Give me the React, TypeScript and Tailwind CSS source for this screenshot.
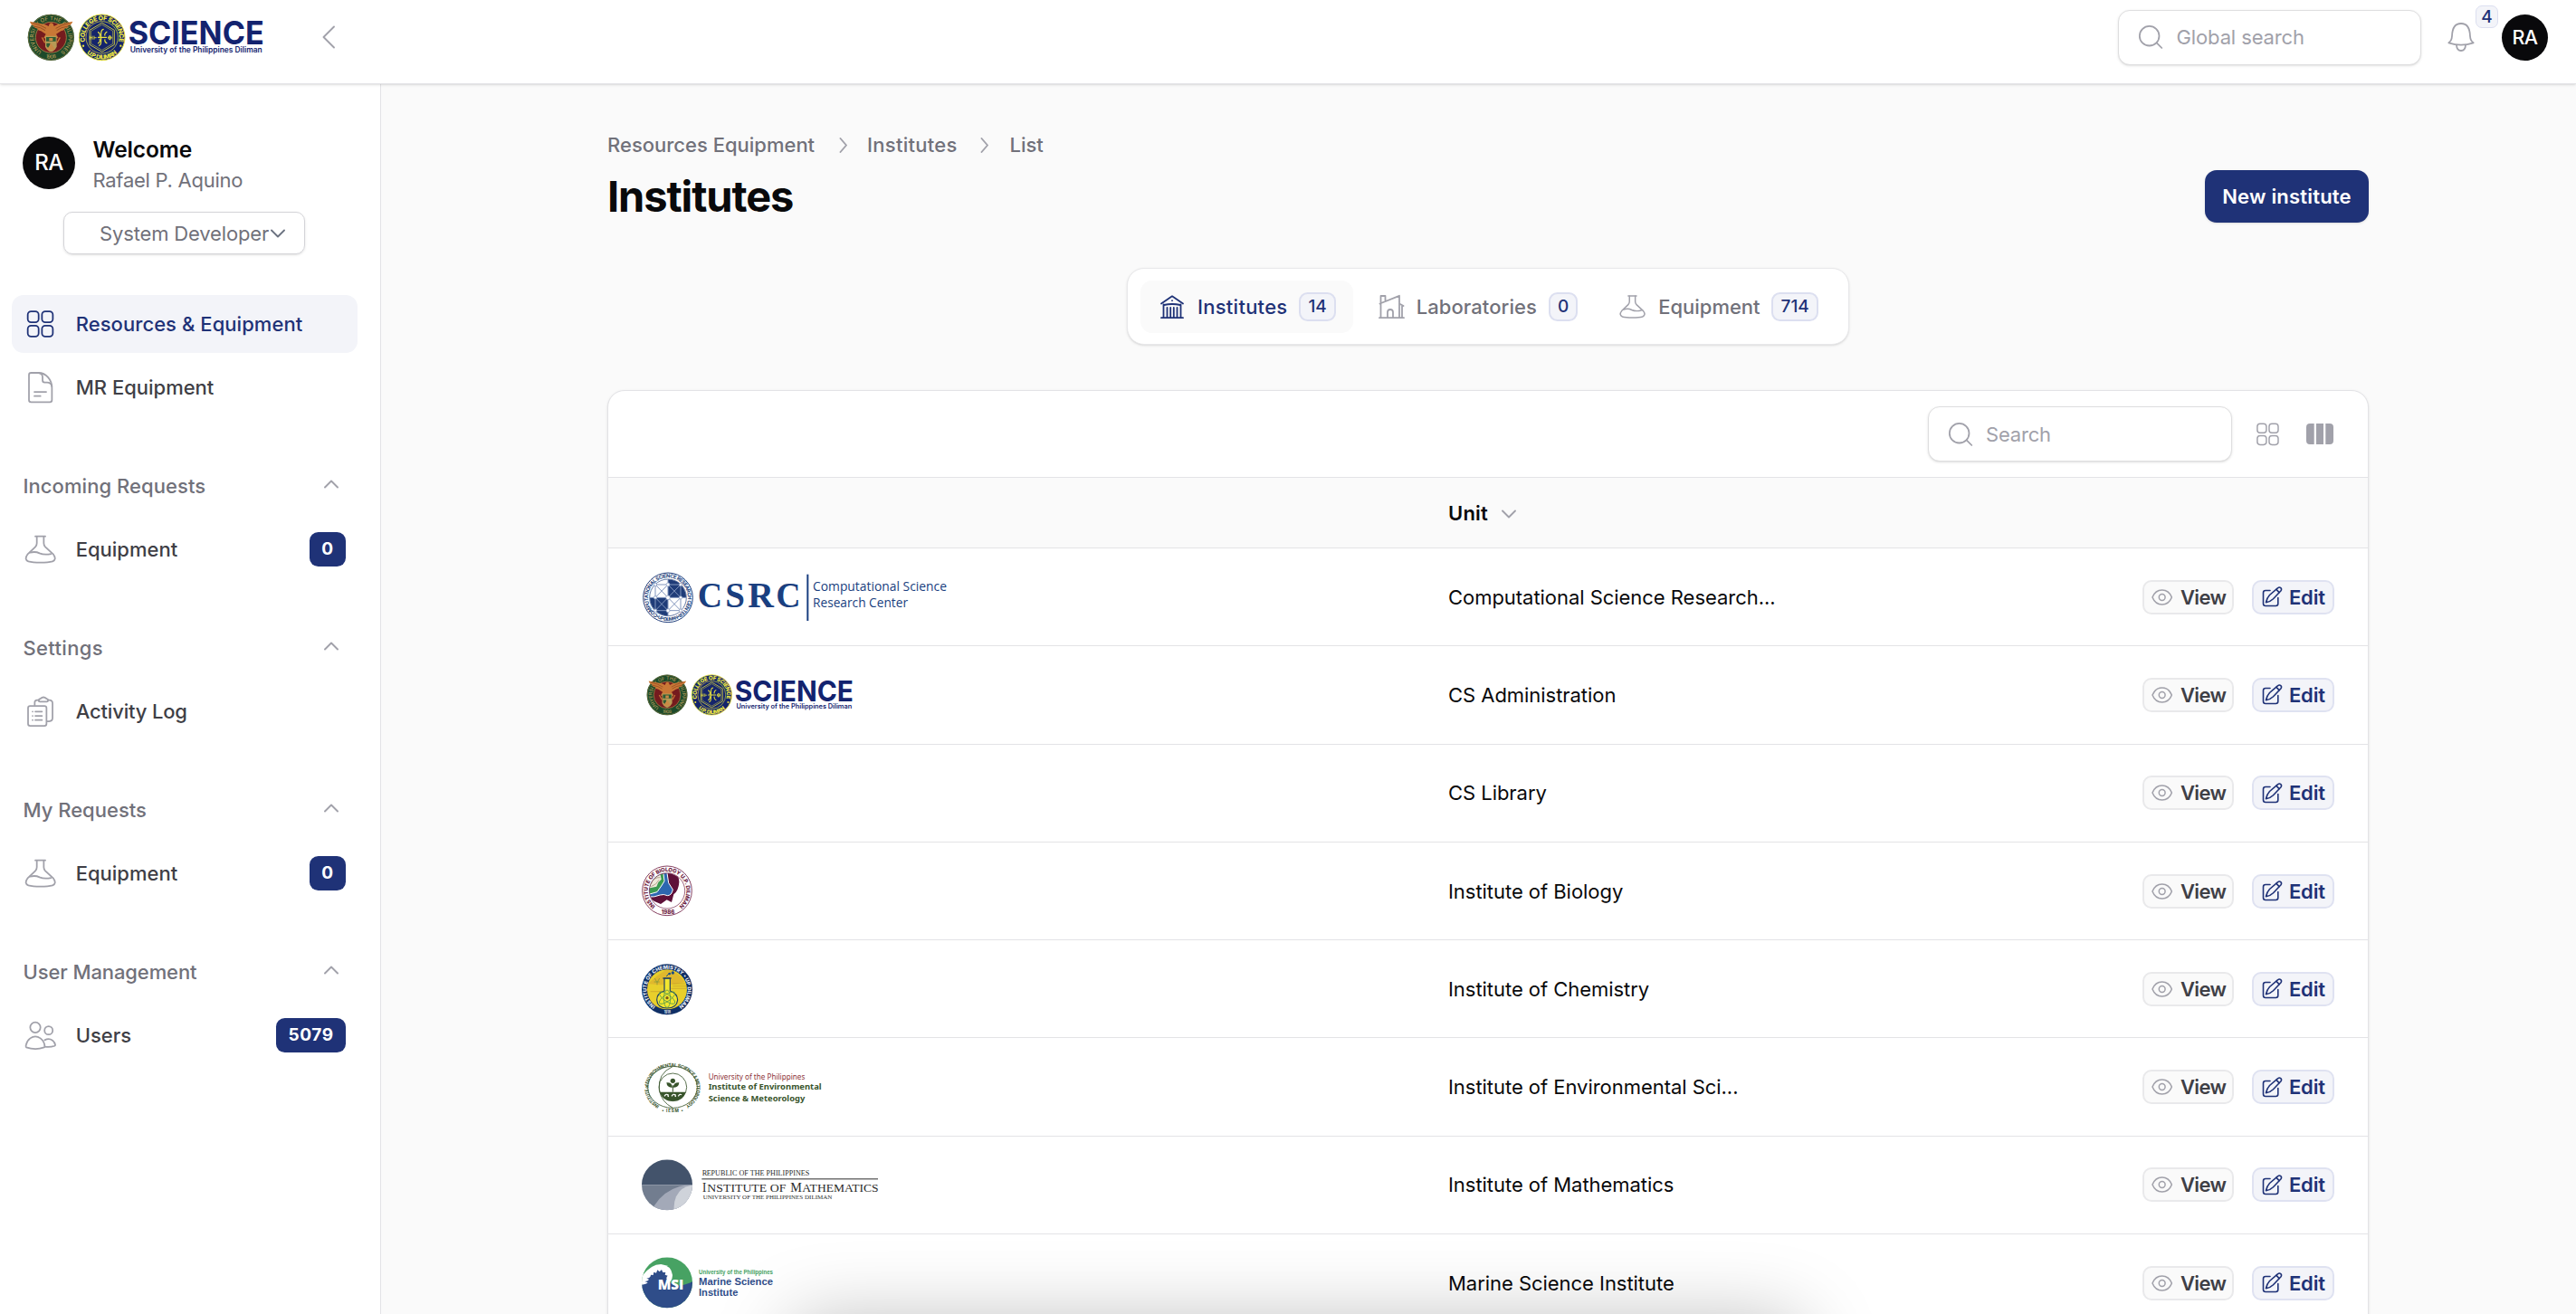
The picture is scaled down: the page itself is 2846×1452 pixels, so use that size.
import { useId, type ReactNode } from 'react';

/* ---------- icons ---------- */

function Icon({ box, className, sw = 5.3, children }: { box: string; className: string; sw?: number; children: ReactNode }) {
  return (
    <svg viewBox={box} className={className} fill="none" stroke="currentColor" strokeWidth={sw} strokeLinecap="round" strokeLinejoin="round">
      {children}
    </svg>
  );
}

function GridIcon({ className }: { className: string }) {
  return (
    <Icon box="77 117 115 115" className={className}>
      <rect x="91" y="132.500" width="36" height="36" rx="11" />
      <rect x="138" y="132.500" width="36" height="36" rx="11" />
      <rect x="91" y="179.500" width="36" height="36" rx="11" />
      <rect x="138" y="179.500" width="36" height="36" rx="11" />
    </Icon>
  );
}

function DocIcon({ className }: { className: string }) {
  return (
    <Icon box="77 327 115 115" className={className}>
      <path d="M102 336h25c24 0 44 22 44 50v40q0 7-7 7h-62q-7 0-7-7v-83q0-7 7-7z" />
      <path d="M127 336q13 2 13 14v11q0 7 7 7h8q13 0 16 13" />
      <path d="M113 399h39M113 413h20" />
    </Icon>
  );
}

function FlaskIcon({ className }: { className: string }) {
  return (
    <Icon box="77 865 115 115" className={className}>
      <path d="M116 879h33" />
      <path d="M121 880v22q0 7-5 12L90 939q-12 16 3 23q14 4 40 4t40-4q15-7 3-23L149 914q-5-5-5-12v-22" />
      <path d="M98 933q18-5 32 2q16 7 38 2" />
    </Icon>
  );
}

function ClipboardIcon({ className }: { className: string }) {
  return (
    <Icon box="77 81 115 115" className={className}>
      <rect x="92" y="120" width="61" height="66" rx="7" />
      <path d="M114 118v-9q0-8 8-8h6M158 101h4q11 0 11 11v48q0 11-11 11h-6" />
      <path d="M127 103q0-6 6-7q10-9 20 0q6 1 5 7q0 3-4 3h-23q-4 0-4-3z" />
      <path d="M107 139h.1M107 153h.1M107 167h.1M116 139h22M116 153h22M116 167h22" />
    </Icon>
  );
}

function UsersIcon({ className }: { className: string }) {
  return (
    <Icon box="77 1158 115 115" className={className}>
      <circle cx="116" cy="1189" r="17" />
      <circle cx="160" cy="1199" r="13.500" />
      <path d="M86 1255q-2-3-1-7q3-15 14-23q17-12 34 0q14 11 14 27q0 2-2 3q-28 10-59 0z" />
      <path d="M147 1231q14-8 26 1q8 7 9 15q0 2-2 3q-14 5-32 3" />
    </Icon>
  );
}

function SearchIcon({ className }: { className: string }) {
  return (
    <Icon box="118 74 96 96" className={className}>
      <circle cx="162" cy="118" r="32.500" />
      <path d="M186 141l17 17" />
    </Icon>
  );
}

function BellIcon({ className }: { className: string }) {
  return (
    <Icon box="1133 66 114 114" className={className}>
      <path d="M1149 142q10-7 11-22q1-42 30-42t30 42q1 15 11 22q-41 14-82 0z" />
      <path d="M1175 150q1 18 15 18t15-18" />
    </Icon>
  );
}

function BankIcon({ className }: { className: string }) {
  return (
    <Icon box="1278 323 32 32" className={className} sw={1.8}>
      <path d="M1282 335.500L1294 327.300L1306 335.500M1285 337q9-2 18 0" />
      <path d="M1284.500 336.500v14M1303.500 336.500v14M1288.500 340v10.500M1292.200 340v10.500M1295.800 340v10.500M1299.500 340v10.500M1282 351.200h24M1294 332.200h.01" />
    </Icon>
  );
}

function FactoryIcon({ className }: { className: string }) {
  return (
    <Icon box="1520 323 32 32" className={className} sw={1.8}>
      <path d="M1524.500 334v-7h5v5M1523.500 335.500l21.500-8.700M1524.500 335.500v15.500M1545 327v23.500M1545 335.500l4.500 2.500M1548 338v13M1523 351.200h27" />
      <path d="M1532 350.500v-5.500q0-3 3-3t3 3v5.500" />
    </Icon>
  );
}

function EyeIcon({ className }: { className: string }) {
  return (
    <Icon box="0 0 23.400 18" className={className} sw={1.5}>
      <path d="M1 9C3 4 7 1 11.700 1S20.400 4 22.400 9C20.400 14 16.400 17 11.700 17S3 14 1 9z" />
      <circle cx="11.700" cy="9" r="3.400" />
    </Icon>
  );
}

function EditIcon({ className }: { className: string }) {
  return (
    <Icon box="0 0 23 23" className={className} sw={1.6}>
      <path d="M9 4.500H4Q1.500 4.500 1.500 7V19Q1.500 21.500 4 21.500H15.300Q17.800 21.500 17.800 19V12.500" />
      <path d="M4.500 17.700q1-5 4-8.200L17.400 1.800q1.900-1.500 3.400-.2t0 3.400L12.500 13.700q-3 3-8 4z" />
      <path d="M16 3.400l3 3.200" />
    </Icon>
  );
}

function ColumnsIcon({ className }: { className: string }) {
  return (
    <svg viewBox="0 0 30 23" className={className} fill="currentColor">
      <path d="M4 0h4.700v23H4q-4 0-4-4V4q0-4 4-4zM11 0h8v23h-8zM21.300 0H26q4 0 4 4v15q0 4-4 4h-4.700z" />
    </svg>
  );
}

function Chevron({ dir, className }: { dir: 'left' | 'right' | 'up' | 'down'; className: string }) {
  const paths = {
    left: 'M13 1.500L1.500 13L13 24.500',
    right: 'M1.500 1L8 8.500L1.500 16',
    up: 'M1 8.500L8 1.500L15 8.500',
    down: 'M1 1.500L8 8.500L15 1.500',
  };
  const boxes = { left: '0 0 15 26', right: '0 0 10 17', up: '0 0 16 10', down: '0 0 16 10' };
  return (
    <Icon box={boxes[dir]} className={className} sw={1.9}>
      <path d={paths[dir]} />
    </Icon>
  );
}

/* ---------- logos ---------- */

type RingProps = { cx: number; cy: number; r: number; size: number; len: number; fill: string; bottom?: boolean; weight?: number; children: string };

function RingText({ cx, cy, r, size, len, fill, bottom = false, weight = 700, children }: RingProps) {
  const id = useId();
  const d = bottom
    ? `M${cx} ${cy - r}a${r} ${r} 0 0 0 0 ${2 * r}a${r} ${r} 0 0 0 0 ${-2 * r}`
    : `M${cx} ${cy + r}a${r} ${r} 0 0 1 0 ${-2 * r}a${r} ${r} 0 0 1 0 ${2 * r}`;
  return (
    <>
      <path id={id} d={d} fill="none" />
      <text fontSize={size} fill={fill} fontWeight={weight} textAnchor="middle" textLength={len}>
        <textPath href={`#${id}`} startOffset="50%" textLength={len}>
          {children}
        </textPath>
      </text>
    </>
  );
}

function ScienceLogo({ className }: { className: string }) {
  return (
    <svg viewBox="90 40 790 165" className={className} fontFamily="Inter, sans-serif" overflow="visible">
      <circle cx="169" cy="122" r="77" fill="#1c4a2a" />
      <circle cx="169" cy="122" r="75" fill="none" stroke="#8d7f45" strokeWidth="2" />
      <circle cx="169" cy="122" r="51" fill="#751b1e" stroke="#a3884a" strokeWidth="2.500" />
      <RingText cx={169} cy={122} r={57} size={18} len={292} fill="#b49b58" weight={500}>UNIVERSITY OF THE PHILIPPINES</RingText>
      <RingText cx={169} cy={122} r={70} size={17} len={36} fill="#b49b58" weight={500} bottom>1908</RingText>
      <path d="M99 69q30 5 50 10l12 6l3-8q6-7 12 0l3 8l12-6q20-5 50-10q-4 12-15 14q0 8-12 10q-2 7-12 8l-16 10l8 14h-50l8-14l-16-10q-10-1-12-8q-12-2-12-10q-10-2-13-14z" fill="#c97836" />
      <path d="M107 74q28 6 46 18M112 85q24 3 38 14M231 74q-28 6-46 18M226 85q-24 3-38 14" stroke="#7e3d1c" strokeWidth="2" fill="none" />
      <path d="M150 117h38v36q-7 14-19 17q-12-3-19-17z" fill="#b79a55" />
      <path d="M153 121h32v14h-32zM154 141h12v20q-8-4-12-10z" fill="#2c5a34" />
      <path d="M169 141l14 22h-28zM163 124h12v10h-12z" fill="#c98a46" />
      <path d="M139 122l10 18M199 122l-10 18" stroke="#c97836" strokeWidth="4" />

      <circle cx="338" cy="122" r="76" fill="#14246c" stroke="#e9e23c" strokeWidth="3" />
      <circle cx="338" cy="122" r="53" fill="none" stroke="#e9e23c" strokeWidth="2" />
      <RingText cx={338} cy={122} r={57} size={21} len={208} fill="#f0ea40" weight={800}>COLLEGE OF SCIENCE</RingText>
      <RingText cx={338} cy={122} r={72.5} size={20} len={112} fill="#f0ea40" weight={800} bottom>U.P. DILIMAN</RingText>
      <g fill="none" stroke="#e9e23c" strokeWidth="2.500">
        <path d="M338 74l41 24v48l-41 24l-41-24V98z" />
        <path d="M338 80l36 21v42l-36 21l-36-21v-42z" strokeWidth="1.500" />
        <path d="M344 95q-9 0-9 16v22q0 16-8 16M324 122h30M324 104q10 4 6 16M324 142q10-4 6-16M355 103q-10 6-7 14M355 142q-10-6-7-14" strokeWidth="3.500" />
        <path d="M298 117v12M306 117v12M298 123h8M312 117v12M312 123h8M364 115v16M357 123h14" />
        <circle cx="364" cy="123" r="5.500" />
      </g>
      <path d="M276 150h.1M400 150h.1" stroke="#e9e23c" strokeWidth="7" strokeLinecap="round" />

      <text x="425" y="145" fontSize="107" fontWeight="700" fill="#13236f" textLength="450" lengthAdjust="spacingAndGlyphs">SCIENCE</text>
      <text x="431" y="173" fontSize="25" fontWeight="600" fill="#13236f" textLength="438" lengthAdjust="spacingAndGlyphs">University of the Philippines Diliman</text>
    </svg>
  );
}

function CsrcLogo({ className }: { className: string }) {
  return (
    <svg viewBox="147 17 1080 324" className={className}>
      <g fill="none" stroke="#223f7c">
        <circle cx="234" cy="180" r="82" strokeWidth="3" />
        <circle cx="234" cy="180" r="61" strokeWidth="2" />
      </g>
      <path d="M234 180V120a60 60 0 0 1 60 60zM234 180v60a60 60 0 0 1-60-60z" fill="#1f3c78" />
      <g fontFamily="Inter, sans-serif">
        <RingText cx={234} cy={180} r={66} size={17} len={345} fill="#223f7c">COMPUTATIONAL SCIENCE RESEARCH CENTER</RingText>
        <RingText cx={234} cy={180} r={77} size={15} len={84} fill="#223f7c" bottom>• UP-DILIMAN •</RingText>
      </g>
      <path d="M192 137h84v86h-84zM192 137l84 86M276 137l-84 86M234 120v120M174 180h120M192 180l42-43l42 43l-42 43z" fill="none" stroke="#8296bd" strokeWidth="3" />
      <g fill="#fff" stroke="#8296bd" strokeWidth="2">
        <circle cx="192" cy="137" r="5" />
        <circle cx="234" cy="137" r="6" />
        <circle cx="276" cy="137" r="5" />
        <circle cx="192" cy="180" r="5" />
        <circle cx="234" cy="180" r="7" />
        <circle cx="276" cy="180" r="5" />
        <circle cx="192" cy="223" r="5" />
        <circle cx="234" cy="223" r="6" />
        <circle cx="276" cy="223" r="5" />
      </g>
      <g fontFamily="'Liberation Serif', serif" fontWeight="700" fontSize="122" fill="#1a3f80">
        <text x="332" y="213" textLength="82" lengthAdjust="spacingAndGlyphs">C</text>
        <text x="424" y="213" textLength="65" lengthAdjust="spacingAndGlyphs">S</text>
        <text x="499" y="213" textLength="86" lengthAdjust="spacingAndGlyphs">R</text>
        <text x="592" y="213" textLength="82" lengthAdjust="spacingAndGlyphs">C</text>
      </g>
      <rect x="694" y="103" width="6" height="154" fill="#1a3f80" />
      <g fontFamily="'Open Sans', sans-serif" fontSize="43" fill="#1a3f80">
        <text x="714" y="158" textLength="444" lengthAdjust="spacingAndGlyphs">Computational Science</text>
        <text x="714" y="211" textLength="315" lengthAdjust="spacingAndGlyphs">Research Center</text>
      </g>
    </svg>
  );
}

function BiologyLogo({ className }: { className: string }) {
  const clip = useId();
  return (
    <svg viewBox="147 2 1080 324" className={className} fontFamily="Inter, sans-serif">
      <clipPath id={clip}><circle cx="231" cy="162" r="58" /></clipPath>
      <circle cx="231" cy="162" r="82" fill="#fff" stroke="#6d1b41" strokeWidth="2.500" />
      <g clipPath={`url(#${clip})`}>
        <path d="M170 100h80q22 10 21 34q-2 28-18 40l-7 26l-16-8l-20 14q-20-6-40-22z" fill="#5e1139" />
        <path d="M170 96h60l6 40l14 22q-4 20-18 20q-12-6-24-2q-20 8-38 6z" fill="#2d67b0" stroke="#fff" strokeWidth="3" />
        <path d="M170 96h48l4 34l-10 16l-14 20l-28 8z" fill="#3b9a51" stroke="#fff" strokeWidth="3" />
        <path d="M170 96h36l6 28l-10 10l-6 14l-26 6z" fill="#efe9dc" />
        <path d="M178 140q8-24 30-22M178 148q18-6 26-22" stroke="#a9997f" strokeWidth="2.500" fill="none" />
      </g>
      <circle cx="231" cy="162" r="59" fill="none" stroke="#6d1b41" strokeWidth="2" />
      <RingText cx={231} cy={162} r={64} size={18} len={318} fill="#6d1b41" weight={800}>INSTITUTE OF BIOLOGY U.P. DILIMAN</RingText>
      <text x="212" y="238" fontSize="18" fontWeight="800" fill="#6d1b41" textLength="44">1986</text>
    </svg>
  );
}

function ChemistryLogo({ className }: { className: string }) {
  return (
    <svg viewBox="147 326 1080 324" className={className} fontFamily="Inter, sans-serif">
      <circle cx="231" cy="489" r="84" fill="#0f2f66" />
      <circle cx="231" cy="489" r="66" fill="#e8cf2b" />
      <path d="M168 470q30-30 60-46q40 4 62 40q-50 16-122 6z" fill="#d9a52f" opacity=".55" />
      <path d="M250 478h46M244 486h52M176 496h40M250 470h40" stroke="#b58c2c" strokeWidth="2" opacity=".7" />
      <RingText cx={231} cy={489} r={68} size={17} len={345} fill="#e6ecf5" weight={800}>INSTITUTE OF CHEMISTRY • UP DILIMAN</RingText>
      <text x="221" y="569" fontSize="13" fontWeight="700" fill="#e6ecf5" textLength="22" lengthAdjust="spacingAndGlyphs">1918</text>
      <path d="M222 452v42q-25 8-25 30q2 27 34 27t35-27q-1-22-25-30v-42z" fill="#f2e62f" stroke="#1c3d66" strokeWidth="3.500" />
      <path d="M217 452h28" stroke="#1c3d66" strokeWidth="4" />
      <g fill="none" stroke="#5c9a4a" strokeWidth="2.500">
        <ellipse cx="231" cy="517" rx="11" ry="31" transform="rotate(55 231 517)" />
        <ellipse cx="231" cy="517" rx="11" ry="31" transform="rotate(-55 231 517)" />
        <ellipse cx="231" cy="520" rx="11" ry="29" />
      </g>
      <circle cx="231" cy="517" r="5" fill="#7c5a1c" />
      <path d="M229 446q4-8 12-11" stroke="#1c4f86" strokeWidth="3" fill="none" />
      <circle cx="239" cy="437" r="4" fill="#1c4f86" />
      <circle cx="250" cy="434" r="5" fill="#1c4f86" />
      <path d="M190 452l8 14l8-14M198 466v8M188 464h18" stroke="#8c9a3a" strokeWidth="2.500" fill="none" />
    </svg>
  );
}

function EnvironmentLogo({ className }: { className: string }) {
  return (
    <svg viewBox="147 -11 1080 324" className={className}>
      <g fill="none" stroke="#38542b" strokeWidth="2.500">
        <ellipse cx="249" cy="152" rx="82" ry="69" />
        <circle cx="250" cy="152" r="46" />
        <path d="M249 84q-50 22-44 78q8 40 44 58" />
      </g>
      <g fontFamily="Inter, sans-serif">
        <g transform="matrix(1.13 0 0 1 -32.500 0)">
          <RingText cx={249} cy={154} r={71} size={14} len={365} fill="#38542b">INSTITUTE of ENVIRONMENTAL SCIENCE &amp; METEOROLOGY</RingText>
        </g>
        <text x="214" y="235" fontSize="14" fontWeight="700" fill="#38542b" textLength="70">• IESM •</text>
      </g>
      <path d="M207 168h86q-8 30-43 30t-43-30z" fill="#38542b" />
      <path d="M250 168v-22" stroke="#38542b" strokeWidth="3" />
      <circle cx="250" cy="131" r="8" fill="#38542b" />
      <path d="M249 153q-18 2-20-16q18-2 20 16zM251 153q18 2 20-16q-18-2-20 16z" fill="#38542b" />
      <path d="M222 182q6-10 13-4q-4 4 2 5M246 182q6-10 13-4q-4 4 2 5M268 182q6-10 11-4" stroke="#fff" strokeWidth="3.500" fill="none" />
      <g fontFamily="'Noto Sans', sans-serif">
        <text x="368" y="126" fontSize="24" fill="#8d3338" textLength="320" lengthAdjust="spacingAndGlyphs">University of the Philippines</text>
        <text x="368" y="161" fontSize="27" fontWeight="700" fill="#38542b" textLength="375" lengthAdjust="spacingAndGlyphs">Institute of Environmental</text>
        <text x="368" y="199" fontSize="27" fontWeight="700" fill="#38542b" textLength="320" lengthAdjust="spacingAndGlyphs">Science &amp; Meteorology</text>
      </g>
    </svg>
  );
}

function MathLogo({ className }: { className: string }) {
  const clip = useId();
  return (
    <svg viewBox="147 314 1080 324" className={className} fontFamily="'Liberation Serif', serif">
      <clipPath id={clip}><circle cx="231" cy="477" r="84" /></clipPath>
      <g clipPath={`url(#${clip})`}>
        <rect x="147" y="393" width="168" height="84" fill="#43536b" />
        <rect x="147" y="477" width="168" height="84" fill="#727d8f" />
        <path d="M187 548q30-50 86-66q20-5 42-4v90H187z" fill="#a3a9b8" />
        <path d="M315 478q-38 4-54 38q-10 24-6 50h60z" fill="#cfd3da" />
      </g>
      <g fill="#2b2b2b">
        <text x="347" y="446" fontSize="25" textLength="14">R</text>
        <text x="362" y="446" fontSize="22" textLength="341" lengthAdjust="spacingAndGlyphs">EPUBLIC OF THE PHILIPPINES</text>
        <rect x="346" y="456" width="584" height="3" />
        <text x="348" y="500" fontSize="46" textLength="13" lengthAdjust="spacingAndGlyphs">I</text>
        <text x="364" y="500" fontSize="38" textLength="261" lengthAdjust="spacingAndGlyphs">NSTITUTE OF</text>
        <text x="640" y="500" fontSize="46" textLength="38" lengthAdjust="spacingAndGlyphs">M</text>
        <text x="679" y="500" fontSize="38" textLength="253" lengthAdjust="spacingAndGlyphs">ATHEMATICS</text>
        <text x="350" y="525" fontSize="20" textLength="428" lengthAdjust="spacingAndGlyphs">UNIVERSITY OF THE PHILIPPINES DILIMAN</text>
      </g>
    </svg>
  );
}

function MarineLogo({ className }: { className: string }) {
  const clip = useId();
  return (
    <svg viewBox="147 641 1080 324" className={className} fontFamily="'Liberation Sans', sans-serif">
      <clipPath id={clip}><circle cx="231" cy="801" r="84" /></clipPath>
      <g clipPath={`url(#${clip})`}>
        <rect x="147" y="717" width="168" height="168" fill="#47a263" />
        <path d="M147 780q30-40 64-40q34 4 38 36q0 12-6 20l-96 24z" fill="#fff" />
        <path d="M147 808q16-2 20-7l-10-4q12-2 14-7l-8-3q14-2 14-12l8 1l2-10l8 3l4-10l7 6l7-7l4 9h9l-2 8l9 3q-8 8 0 17q30 26 70 8q14-6 24-12v120H147z" fill="#2f4d89" />
      </g>
      <text x="200" y="823" fontSize="48" fontWeight="800" fill="#fff" fontFamily="'Open Sans', sans-serif" textLength="86" lengthAdjust="spacingAndGlyphs">MSI</text>
      <text x="336" y="773" fontSize="19" fontWeight="700" fill="#47a263" textLength="246" lengthAdjust="spacingAndGlyphs">University of the Philippines</text>
      <text x="336" y="809" fontSize="35" fontWeight="700" fill="#2f4d89" textLength="246" lengthAdjust="spacingAndGlyphs">Marine Science</text>
      <text x="336" y="844" fontSize="35" fontWeight="700" fill="#2f4d89" textLength="130" lengthAdjust="spacingAndGlyphs">Institute</text>
    </svg>
  );
}

/* ---------- sidebar ---------- */

function NavItem({ icon, label, tracking = '', active = false, badge }: { icon: ReactNode; label: string; tracking?: string; active?: boolean; badge?: string }) {
  return (
    <div className={`flex h-16 items-center rounded-[13px] px-[12.800px] font-medium ${active ? 'bg-[#f3f4f9] text-[#1f3277]' : 'text-[#3f3f46]'}`}>
      <span className={active ? '' : 'text-[#a1a1aa]'}>{icon}</span>
      <span className={`ml-[19.500px] flex-1 ${tracking}`}>{label}</span>
      {badge && (
        <span className="flex h-[38px] min-w-[39px] items-center justify-center rounded-[9.600px] bg-[#1f3277] px-[13.500px] text-[19px] font-bold tracking-[0.6px] text-white">
          {badge}
        </span>
      )}
    </div>
  );
}

function NavGroup({ label, tracking = '', children }: { label: string; tracking?: string; children: ReactNode }) {
  return (
    <div className="flex flex-col gap-[6.400px]">
      <div className="flex h-16 items-center justify-between pl-[12.500px] pr-[21px] font-medium text-[#71717a]">
        <span className={tracking}>{label}</span>
        <Chevron dir="up" className="mb-[3px] h-[10px] w-4 text-[#a1a1aa]" />
      </div>
      {children}
    </div>
  );
}

function Sidebar() {
  return (
    <aside className="flex w-[421px] shrink-0 flex-col border-r border-[#e3e3e6] bg-white pt-[54px]">
      <div className="flex items-start pl-[25px]">
        <div className="mt-1 flex h-[58px] w-[58px] items-center justify-center rounded-full bg-[#09090b] text-[24px] font-medium tracking-[-0.5px] text-white">RA</div>
        <div className="ml-[19.500px]">
          <div className="text-[24.500px] leading-[36px] font-semibold tracking-[-0.1px] text-[#09090b]">Welcome</div>
          <div className="-mt-px leading-[35px] tracking-[-0.27px] text-[#71717a]">Rafael P. Aquino</div>
        </div>
      </div>
      <div className="mt-[17px] ml-[70px] flex h-[47px] w-[267px] items-center rounded-[10px] border border-[#d4d4d8] pl-[39px] text-[#71717a] shadow-sm">
        <span className="tracking-[-0.15px]">System Developer</span>
        <Chevron dir="down" className="ml-[1.500px] h-[10px] w-4 shrink-0 text-[#6b7280]" />
      </div>
      <nav className="mt-[45px] flex flex-col gap-[44.600px] pl-[13px] pr-[25px]">
        <div className="flex flex-col gap-[6.400px]">
          <NavItem active icon={<GridIcon className="size-[38.400px]" />} label="Resources & Equipment" tracking="tracking-[0.06px]" />
          <NavItem icon={<DocIcon className="size-[38.400px]" />} label="MR Equipment" />
        </div>
        <NavGroup label="Incoming Requests" tracking="tracking-[0.06px]">
          <NavItem icon={<FlaskIcon className="size-[38.400px]" />} label="Equipment" badge="0" />
        </NavGroup>
        <NavGroup label="Settings" tracking="tracking-[0.34px]">
          <NavItem icon={<ClipboardIcon className="size-[38.400px]" />} label="Activity Log" tracking="tracking-[-0.17px]" />
        </NavGroup>
        <NavGroup label="My Requests">
          <NavItem icon={<FlaskIcon className="size-[38.400px]" />} label="Equipment" badge="0" />
        </NavGroup>
        <NavGroup label="User Management" tracking="tracking-[-0.1px]">
          <NavItem icon={<UsersIcon className="size-[38.400px]" />} label="Users" badge="5079" />
        </NavGroup>
      </nav>
    </aside>
  );
}

/* ---------- header ---------- */

function SearchBox({ label, className, tracking }: { label: string; className: string; tracking: string }) {
  return (
    <div className={`flex items-center rounded-[13px] border border-[#dededf] bg-white pl-[19px] text-[#a1a1aa] shadow-sm ${className}`}>
      <SearchIcon className="size-8" />
      <span className={`ml-[12.500px] ${tracking}`}>{label}</span>
    </div>
  );
}

function Header() {
  return (
    <header className="relative z-10 h-[93px] shrink-0 border-b border-[#e3e3e6] bg-white shadow-sm">
      <div className="flex h-[82px] items-center">
        <ScienceLogo className="ml-[30px] h-[55px] w-[263.330px]" />
        <Chevron dir="left" className="ml-[62.500px] h-[26px] w-[15px] text-[#a1a1aa]" />
        <SearchBox label="Global search" className="ml-auto h-[61px] w-[335px]" tracking="tracking-[-0.12px]" />
        <div className="relative ml-[25px]">
          <BellIcon className="size-[38px] text-[#a1a1aa]" />
          <span className="absolute top-[-16px] left-[35px] flex h-[25px] w-[25px] items-center justify-center rounded-[7px] border-[1.500px] border-[#dcdff0] bg-[#f3f4f9] text-[19px] font-medium text-[#1f3277]">4</span>
        </div>
        <div className="mr-[31px] ml-[26px] flex h-[51px] w-[51px] items-center justify-center rounded-full bg-[#09090b] text-[21.500px] font-medium tracking-[-0.5px] text-white">RA</div>
      </div>
    </header>
  );
}

/* ---------- main ---------- */

function Tab({ icon, label, count, active = false, tracking = '' }: { icon: ReactNode; label: string; count: string; active?: boolean; tracking?: string }) {
  return (
    <div className={`flex h-[58px] items-center rounded-[13px] px-[19.200px] font-medium ${active ? 'bg-[#fafafa] text-[#1f3277]' : 'text-[#71717a]'}`}>
      <span className={active ? '' : 'text-[#a1a1aa]'}>{icon}</span>
      <span className={`ml-[12px] ${tracking}`}>{label}</span>
      <span className="ml-[12.800px] flex h-8 items-center rounded-[9.600px] border-2 border-[#dcdff0] bg-[#f3f4f9] px-[8.200px] text-[19px] text-[#1f3277]">{count}</span>
    </div>
  );
}

type Unit = { name: string; logo?: ReactNode };

const units: Unit[] = [
  { name: 'Computational Science Research...', logo: <CsrcLogo className="h-[108px] w-[360px]" /> },
  { name: 'CS Administration', logo: <ScienceLogo className="ml-[4.500px] h-[48.120px] w-[230.420px]" /> },
  { name: 'CS Library' },
  { name: 'Institute of Biology', logo: <BiologyLogo className="h-[108px] w-[360px]" /> },
  { name: 'Institute of Chemistry', logo: <ChemistryLogo className="h-[108px] w-[360px]" /> },
  { name: 'Institute of Environmental Sci...', logo: <EnvironmentLogo className="h-[108px] w-[360px]" /> },
  { name: 'Institute of Mathematics', logo: <MathLogo className="h-[108px] w-[360px]" /> },
  { name: 'Marine Science Institute', logo: <MarineLogo className="h-[108px] w-[360px]" /> },
];

function UnitRow({ unit }: { unit: Unit }) {
  return (
    <div className="flex h-[108.300px] items-center border-t border-[#e3e3e6] pr-[37.500px] pl-[37px]">
      <div className="w-[891px]">{unit.logo}</div>
      <div className="flex-1 tracking-[-0.04px] text-[#09090b]">{unit.name}</div>
      <div className="flex gap-[20px] font-semibold">
        <div className="flex h-[38px] w-[101px] items-center rounded-[10px] border-2 border-[#e9e9eb] bg-[#fafafa] pl-[8.500px] text-[#3f3f46]">
          <EyeIcon className="h-[18px] w-[23.400px] text-[#a1a1aa]" />
          <span className="ml-[8.500px] tracking-[-0.6px]">View</span>
        </div>
        <div className="flex h-[38px] w-[91px] items-center rounded-[10px] border-2 border-[#dfe2f1] bg-[#f3f4f9] pl-[9px] text-[#1f3277]">
          <EditIcon className="size-[23px]" />
          <span className="ml-[7.500px] tracking-[-0.2px]">Edit</span>
        </div>
      </div>
    </div>
  );
}

export default function App() {
  return (
    <div className="relative flex h-[1452px] w-[2846px] flex-col overflow-hidden bg-[#fafafa] font-['Inter',sans-serif] text-[22px] leading-8 whitespace-nowrap">
      <Header />
      <div className="flex min-h-0 flex-1">
        <Sidebar />
        <main className="flex-1 pt-[51px] pl-[250px]">
          <div className="w-[1946px]">
            <div className="flex h-8 items-center font-medium text-[#71717a]">
              <span>Resources Equipment</span>
              <Chevron dir="right" className="mr-[21px] ml-[27px] h-[17px] w-[10px] text-[#a1a1aa]" />
              <span className="tracking-[0.25px]">Institutes</span>
              <Chevron dir="right" className="mr-[22.500px] ml-[25.500px] h-[17px] w-[10px] text-[#a1a1aa]" />
              <span>List</span>
            </div>
            <div className="mt-3 flex h-[58px] items-center justify-between">
              <h1 className="text-[47px] font-bold tracking-[-1.100px] text-[#09090b]">Institutes</h1>
              <button className="flex h-[58px] w-[181px] items-center justify-center rounded-[13px] bg-[#1f3277] font-semibold tracking-[0.2px] text-white shadow-sm">New institute</button>
            </div>
            <div className="mt-[50px] flex justify-center">
              <div className="flex h-[85px] items-center gap-[6.400px] rounded-[19px] border border-[#e8e8ea] bg-white px-[13.500px] shadow-sm">
                <Tab active icon={<BankIcon className="size-8" />} label="Institutes" count="14" tracking="tracking-[0.25px]" />
                <Tab icon={<FactoryIcon className="size-8" />} label="Laboratories" count="0" tracking="tracking-[0.07px]" />
                <Tab icon={<FlaskIcon className="size-8" />} label="Equipment" count="714" />
              </div>
            </div>
            <section className="mt-[50px] overflow-hidden rounded-t-[19px] border border-[#e3e3e6] bg-white shadow-sm">
              <div className="flex h-[95px] items-center justify-end pr-[38px]">
                <SearchBox label="Search" className="h-[61px] w-[336px]" tracking="tracking-[-0.2px]" />
                <GridIcon className="ml-[24px] size-8 text-[#a1a1aa]" />
                <ColumnsIcon className="ml-[26.500px] h-[23px] w-[30px] text-[#a1a1aa]" />
              </div>
              <div className="flex h-[78px] items-center border-t border-[#e3e3e6] bg-[#fafafa] pl-[928px]">
                <span className="font-semibold tracking-[0.2px] text-[#09090b]">Unit</span>
                <Chevron dir="down" className="mt-[2px] ml-[15px] h-[10px] w-4 text-[#a1a1aa]" />
              </div>
              {units.map((unit) => (
                <UnitRow key={unit.name} unit={unit} />
              ))}
            </section>
          </div>
        </main>
      </div>
      <div className="absolute top-[1460px] left-[875px] h-[200px] w-[1115px] rounded-[20px] shadow-[0_0_85px_rgba(0,0,0,0.27)]" />
    </div>
  );
}
